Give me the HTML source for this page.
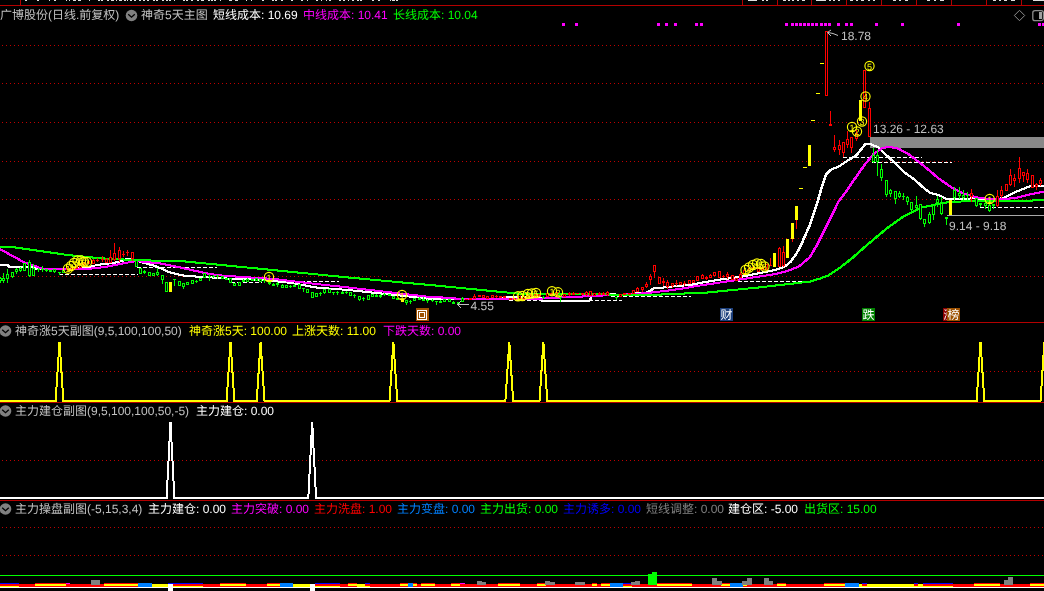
<!DOCTYPE html>
<html><head><meta charset="utf-8"><title>chart</title>
<style>
html,body{margin:0;padding:0;background:#000;overflow:hidden}
text{filter:opacity(1)}
svg{display:block;font-family:'Liberation Sans','Noto Sans CJK SC',sans-serif;}
</style></head><body>
<svg width="1044" height="591" viewBox="0 0 1044 591" shape-rendering="crispEdges" text-rendering="geometricPrecision">
<rect width="1044" height="591" fill="#000"/>
<line x1="2" y1="45.5" x2="1044" y2="45.5" stroke="#c00000" stroke-width="1" stroke-dasharray="1 3"/>
<line x1="2" y1="83.5" x2="1044" y2="83.5" stroke="#c00000" stroke-width="1" stroke-dasharray="1 3"/>
<line x1="2" y1="122.5" x2="1044" y2="122.5" stroke="#c00000" stroke-width="1" stroke-dasharray="1 3"/>
<line x1="2" y1="161.5" x2="1044" y2="161.5" stroke="#c00000" stroke-width="1" stroke-dasharray="1 3"/>
<line x1="2" y1="199.5" x2="1044" y2="199.5" stroke="#c00000" stroke-width="1" stroke-dasharray="1 3"/>
<line x1="2" y1="238.5" x2="1044" y2="238.5" stroke="#c00000" stroke-width="1" stroke-dasharray="1 3"/>
<line x1="2" y1="276.5" x2="1044" y2="276.5" stroke="#c00000" stroke-width="1" stroke-dasharray="1 3"/>
<line x1="2" y1="371.5" x2="1044" y2="371.5" stroke="#c00000" stroke-width="1" stroke-dasharray="1 3"/>
<line x1="2" y1="460.5" x2="1044" y2="460.5" stroke="#c00000" stroke-width="1" stroke-dasharray="1 3"/>
<line x1="2" y1="527.5" x2="1044" y2="527.5" stroke="#c00000" stroke-width="1" stroke-dasharray="1 3"/>
<line x1="2" y1="555.5" x2="1044" y2="555.5" stroke="#c00000" stroke-width="1" stroke-dasharray="1 3"/>
<line x1="0" y1="5.5" x2="1044" y2="5.5" stroke="#b40000" stroke-width="1"/>
<line x1="0" y1="322.5" x2="1044" y2="322.5" stroke="#b40000" stroke-width="1"/>
<line x1="0" y1="402.5" x2="1044" y2="402.5" stroke="#b40000" stroke-width="1"/>
<line x1="0" y1="500.5" x2="1044" y2="500.5" stroke="#b40000" stroke-width="1"/>
<line x1="20.5" y1="0" x2="20.5" y2="6" stroke="#b40000"/>
<line x1="742.5" y1="0" x2="742.5" y2="6" stroke="#b40000"/>
<line x1="777.5" y1="0" x2="777.5" y2="6" stroke="#b40000"/>
<line x1="811.5" y1="0" x2="811.5" y2="6" stroke="#b40000"/>
<line x1="846.5" y1="0" x2="846.5" y2="6" stroke="#b40000"/>
<line x1="881.5" y1="0" x2="881.5" y2="6" stroke="#b40000"/>
<line x1="916.5" y1="0" x2="916.5" y2="6" stroke="#b40000"/>
<line x1="951.5" y1="0" x2="951.5" y2="6" stroke="#b40000"/>
<line x1="986.5" y1="0" x2="986.5" y2="6" stroke="#b40000"/>
<line x1="1021.5" y1="0" x2="1021.5" y2="6" stroke="#b40000"/>
<rect x="870" y="137" width="174" height="11" fill="#888888"/>
<line x1="947" y1="215.5" x2="1044" y2="215.5" stroke="#a8a8a8" stroke-width="1"/>
<line x1="59" y1="274.5" x2="138" y2="274.5" stroke="#ffffff" stroke-width="1" stroke-dasharray="4 2"/>
<line x1="137" y1="267.5" x2="217" y2="267.5" stroke="#ffffff" stroke-width="1" stroke-dasharray="4 2"/>
<line x1="231" y1="282.5" x2="262" y2="282.5" stroke="#ffffff" stroke-width="1" stroke-dasharray="4 2"/>
<line x1="277" y1="281.5" x2="339" y2="281.5" stroke="#ffffff" stroke-width="1" stroke-dasharray="4 2"/>
<line x1="509" y1="300.5" x2="541" y2="300.5" stroke="#ffffff" stroke-width="1" stroke-dasharray="4 2"/>
<line x1="589" y1="300.5" x2="622" y2="300.5" stroke="#ffffff" stroke-width="1" stroke-dasharray="4 2"/>
<line x1="611" y1="296.5" x2="691" y2="296.5" stroke="#ffffff" stroke-width="1" stroke-dasharray="4 2"/>
<line x1="738" y1="281.5" x2="815" y2="281.5" stroke="#ffffff" stroke-width="1" stroke-dasharray="4 2"/>
<line x1="843" y1="157.5" x2="922" y2="157.5" stroke="#ffffff" stroke-width="1" stroke-dasharray="4 2"/>
<line x1="872" y1="162.5" x2="952" y2="162.5" stroke="#ffffff" stroke-width="1" stroke-dasharray="4 2"/>
<line x1="980" y1="207.5" x2="1044" y2="207.5" stroke="#ffffff" stroke-width="1" stroke-dasharray="4 2"/>
<polyline points="0.0,265.0 7.0,265.0 9.0,267.0 32.0,267.0 36.0,268.8 75.0,268.8 85.0,267.6 90.0,266.8 97.4,264.8 100.0,264.5 113.0,263.0 122.0,261.0 127.0,258.5 131.0,258.5 135.0,260.5 146.0,263.5 155.0,266.0 163.0,269.5 170.0,272.5 180.0,275.0 186.0,276.0 204.0,277.0 229.0,278.7 264.0,280.0 291.0,283.0 316.0,287.5 348.0,290.0 423.0,298.0 430.0,299.0 454.0,299.4 500.0,299.4 505.0,297.0 540.0,297.0 541.0,300.5 589.5,300.5 591.5,296.0 600.0,294.5 609.0,293.6 613.0,293.6 616.0,294.8 632.0,294.8 636.0,293.0 645.5,293.0 654.7,287.8 662.8,287.8 665.0,287.0 683.4,285.5 690.3,284.8 700.5,282.8 711.0,281.1 721.6,279.3 732.0,278.0 742.7,276.4 753.2,274.3 763.8,272.2 774.3,270.0 779.6,268.5 784.8,266.3 790.0,262.1 795.4,254.8 800.0,246.5 801.6,243.0 809.7,224.7 817.8,200.0 820.6,190.0 825.7,174.6 830.8,169.6 837.6,167.0 847.7,160.3 856.2,155.2 864.6,144.5 869.7,143.8 878.2,147.6 887.0,156.0 898.5,166.5 903.9,172.2 915.4,180.5 920.8,185.7 929.2,192.5 937.7,195.0 946.2,199.0 958.0,199.2 971.6,198.4 988.5,199.0 1002.0,198.4 1013.9,192.5 1029.0,186.5 1044.0,185.7" fill="none" stroke="#ffffff" stroke-width="2" stroke-linejoin="round"/>
<polyline points="0.0,265.0 7.0,265.0 9.0,267.0 32.0,267.0 36.0,268.8 75.0,268.8 85.0,267.6 90.0,266.8 97.4,264.8 100.0,264.5 113.0,263.0 122.0,261.0 127.0,258.5 131.0,258.5 135.0,260.5 146.0,263.5 155.0,266.0 163.0,269.5 170.0,272.5 180.0,275.0 186.0,276.0 204.0,277.0 229.0,278.7 264.0,280.0 291.0,283.0 316.0,287.5 348.0,290.0 423.0,298.0 430.0,299.0 454.0,299.4 500.0,299.4 505.0,297.0 540.0,297.0 541.0,300.5 589.5,300.5 591.5,296.0 600.0,294.5 609.0,293.6 613.0,293.6 616.0,294.8 632.0,294.8 636.0,293.0 645.5,293.0 654.7,287.8 662.8,287.8 665.0,287.0 683.4,285.5 690.3,284.8 700.5,282.8 711.0,281.1 721.6,279.3 732.0,278.0 742.7,276.4 753.2,274.3 763.8,272.2 774.3,270.0 779.6,268.5 784.8,266.3 790.0,262.1 795.4,254.8 800.0,246.5 801.6,243.0 809.7,224.7 817.8,200.0 820.6,190.0 825.7,174.6 830.8,169.6 837.6,167.0 847.7,160.3 856.2,155.2 864.6,144.5 869.7,143.8 878.2,147.6 887.0,156.0 898.5,166.5 903.9,172.2 915.4,180.5 920.8,185.7 929.2,192.5 937.7,195.0 946.2,199.0 958.0,199.2 971.6,198.4 988.5,199.0 1002.0,198.4 1013.9,192.5 1029.0,186.5 1044.0,185.7" fill="none" stroke="#ffffff" stroke-width="2" stroke-linejoin="round" transform="translate(0.6,0)"/>
<polyline points="0.0,249.3 24.0,262.4 34.5,266.0 40.0,268.0 45.0,269.0 80.0,269.0 90.0,268.6 97.0,268.0 107.0,266.5 117.0,264.5 125.0,263.0 133.0,261.5 137.0,261.0 141.0,261.5 150.0,262.5 160.0,263.5 170.0,265.5 180.0,267.5 209.0,274.0 224.0,275.8 274.0,279.0 307.0,283.0 348.0,287.5 430.0,297.0 441.0,297.0 442.0,298.0 454.0,298.0 455.0,299.0 540.0,299.0 545.0,298.0 558.0,298.0 562.0,297.0 580.0,297.0 583.0,296.2 589.0,296.2 639.0,293.7 649.0,292.8 659.0,291.6 672.0,290.0 686.0,288.0 690.0,287.0 711.0,283.8 732.0,280.7 742.7,279.0 753.2,277.4 763.8,275.8 774.3,274.2 784.8,271.6 795.4,267.9 800.0,265.4 809.7,257.0 817.8,243.0 828.0,222.6 838.0,202.0 846.9,190.0 856.2,176.3 864.6,164.5 873.0,154.3 881.6,148.4 888.3,146.7 898.5,148.8 908.7,154.5 920.5,163.5 930.0,171.3 937.7,178.0 951.3,187.4 963.0,193.3 975.0,197.2 988.5,199.0 1014.0,198.4 1029.0,194.5 1044.0,191.6" fill="none" stroke="#ff00ff" stroke-width="2" stroke-linejoin="round"/>
<polyline points="0.0,249.3 24.0,262.4 34.5,266.0 40.0,268.0 45.0,269.0 80.0,269.0 90.0,268.6 97.0,268.0 107.0,266.5 117.0,264.5 125.0,263.0 133.0,261.5 137.0,261.0 141.0,261.5 150.0,262.5 160.0,263.5 170.0,265.5 180.0,267.5 209.0,274.0 224.0,275.8 274.0,279.0 307.0,283.0 348.0,287.5 430.0,297.0 441.0,297.0 442.0,298.0 454.0,298.0 455.0,299.0 540.0,299.0 545.0,298.0 558.0,298.0 562.0,297.0 580.0,297.0 583.0,296.2 589.0,296.2 639.0,293.7 649.0,292.8 659.0,291.6 672.0,290.0 686.0,288.0 690.0,287.0 711.0,283.8 732.0,280.7 742.7,279.0 753.2,277.4 763.8,275.8 774.3,274.2 784.8,271.6 795.4,267.9 800.0,265.4 809.7,257.0 817.8,243.0 828.0,222.6 838.0,202.0 846.9,190.0 856.2,176.3 864.6,164.5 873.0,154.3 881.6,148.4 888.3,146.7 898.5,148.8 908.7,154.5 920.5,163.5 930.0,171.3 937.7,178.0 951.3,187.4 963.0,193.3 975.0,197.2 988.5,199.0 1014.0,198.4 1029.0,194.5 1044.0,191.6" fill="none" stroke="#ff00ff" stroke-width="2" stroke-linejoin="round" transform="translate(0.6,0)"/>
<polyline points="0.0,247.0 12.0,247.0 40.0,251.0 67.0,255.0 100.0,258.3 133.0,260.0 150.0,260.5 178.0,260.8 261.0,268.9 348.0,277.5 435.0,285.5 522.0,294.0 580.0,294.3 609.0,294.5 612.0,295.2 636.0,295.2 660.0,294.8 662.0,294.2 683.0,294.0 685.0,293.3 700.0,293.2 757.0,287.6 809.7,281.6 820.0,278.5 828.0,275.5 840.0,267.5 852.0,258.0 865.0,246.5 875.0,238.0 887.0,228.0 903.9,216.0 920.8,207.7 937.7,204.0 949.6,202.0 971.6,201.0 1005.5,200.6 1032.6,200.5 1037.7,199.5 1044.0,199.5" fill="none" stroke="#00ff00" stroke-width="2" stroke-linejoin="round"/>
<polyline points="0.0,247.0 12.0,247.0 40.0,251.0 67.0,255.0 100.0,258.3 133.0,260.0 150.0,260.5 178.0,260.8 261.0,268.9 348.0,277.5 435.0,285.5 522.0,294.0 580.0,294.3 609.0,294.5 612.0,295.2 636.0,295.2 660.0,294.8 662.0,294.2 683.0,294.0 685.0,293.3 700.0,293.2 757.0,287.6 809.7,281.6 820.0,278.5 828.0,275.5 840.0,267.5 852.0,258.0 865.0,246.5 875.0,238.0 887.0,228.0 903.9,216.0 920.8,207.7 937.7,204.0 949.6,202.0 971.6,201.0 1005.5,200.6 1032.6,200.5 1037.7,199.5 1044.0,199.5" fill="none" stroke="#00ff00" stroke-width="2" stroke-linejoin="round" transform="translate(0.6,0)"/>
<line x1="0.5" y1="277" x2="0.5" y2="278" stroke="#00ff00"/>
<line x1="0.5" y1="281" x2="0.5" y2="283" stroke="#00ff00"/>
<rect x="-0.5" y="278.5" width="2" height="2" fill="#000" stroke="#00ff00"/>
<line x1="3.5" y1="273" x2="3.5" y2="278" stroke="#00ff00"/>
<line x1="3.5" y1="281" x2="3.5" y2="283" stroke="#00ff00"/>
<rect x="2.5" y="278.5" width="2" height="2" fill="#000" stroke="#00ff00"/>
<line x1="7.5" y1="269" x2="7.5" y2="274" stroke="#00ff00"/>
<line x1="7.5" y1="279" x2="7.5" y2="283" stroke="#00ff00"/>
<rect x="6.5" y="274.5" width="2" height="4" fill="#000" stroke="#00ff00"/>
<line x1="12.5" y1="277" x2="12.5" y2="278" stroke="#00ff00"/>
<rect x="11.5" y="272.5" width="2" height="4" fill="#000" stroke="#00ff00"/>
<line x1="16.5" y1="268" x2="16.5" y2="269" stroke="#00ff00"/>
<line x1="16.5" y1="272" x2="16.5" y2="274" stroke="#00ff00"/>
<rect x="15.5" y="269.5" width="2" height="2" fill="#000" stroke="#00ff00"/>
<line x1="20.5" y1="267" x2="20.5" y2="268" stroke="#00ff00"/>
<line x1="20.5" y1="271" x2="20.5" y2="272" stroke="#00ff00"/>
<rect x="19.5" y="268.5" width="2" height="2" fill="#000" stroke="#00ff00"/>
<rect x="23.5" y="263.5" width="2" height="7" fill="#000" stroke="#00ff00"/>
<line x1="29.5" y1="260" x2="29.5" y2="262" stroke="#00ff00"/>
<line x1="29.5" y1="276" x2="29.5" y2="277" stroke="#00ff00"/>
<rect x="28.5" y="262.5" width="2" height="13" fill="#000" stroke="#00ff00"/>
<line x1="33.5" y1="264" x2="33.5" y2="268" stroke="#00ff00"/>
<rect x="32.5" y="268.5" width="2" height="7" fill="#000" stroke="#00ff00"/>
<line x1="38.5" y1="268" x2="38.5" y2="269" stroke="#00ff00"/>
<line x1="38.5" y1="270" x2="38.5" y2="272" stroke="#00ff00"/>
<line x1="37" y1="269.5" x2="40" y2="269.5" stroke="#00ff00"/>
<line x1="42.5" y1="266" x2="42.5" y2="269" stroke="#00ff00"/>
<line x1="42.5" y1="270" x2="42.5" y2="272" stroke="#00ff00"/>
<line x1="41" y1="269.5" x2="44" y2="269.5" stroke="#00ff00"/>
<line x1="46.5" y1="271" x2="46.5" y2="272" stroke="#00ff00"/>
<rect x="45.5" y="269.5" width="2" height="1" fill="#000" stroke="#00ff00"/>
<rect x="49.5" y="270.5" width="2" height="1" fill="#000" stroke="#00ff00"/>
<line x1="54.5" y1="272" x2="54.5" y2="273" stroke="#00ff00"/>
<rect x="53.5" y="269.5" width="2" height="2" fill="#000" stroke="#00ff00"/>
<line x1="59.5" y1="273" x2="59.5" y2="275" stroke="#00ff00"/>
<line x1="58" y1="272.5" x2="61" y2="272.5" stroke="#00ff00"/>
<rect x="62.5" y="270.5" width="2" height="2" fill="#000" stroke="#00ff00"/>
<line x1="67.5" y1="270" x2="67.5" y2="271" stroke="#ff0000"/>
<rect x="66.5" y="266.5" width="2" height="3" fill="#000" stroke="#ff0000"/>
<line x1="72.5" y1="266" x2="72.5" y2="267" stroke="#ff0000"/>
<rect x="71.5" y="267.5" width="2" height="2" fill="#000" stroke="#ff0000"/>
<line x1="76.5" y1="265" x2="76.5" y2="266" stroke="#ff0000"/>
<rect x="75.5" y="266.5" width="2" height="2" fill="#000" stroke="#ff0000"/>
<rect x="79.5" y="264.5" width="2" height="3" fill="#000" stroke="#ff0000"/>
<line x1="84.5" y1="265" x2="84.5" y2="266" stroke="#ff0000"/>
<rect x="83.5" y="262.5" width="2" height="2" fill="#000" stroke="#ff0000"/>
<line x1="88.5" y1="260" x2="88.5" y2="261" stroke="#ff0000"/>
<rect x="87.5" y="261.5" width="2" height="2" fill="#000" stroke="#ff0000"/>
<line x1="93.5" y1="259" x2="93.5" y2="260" stroke="#ff0000"/>
<rect x="92.5" y="260.5" width="2" height="3" fill="#000" stroke="#ff0000"/>
<line x1="97.5" y1="258" x2="97.5" y2="260" stroke="#ff0000"/>
<line x1="97.5" y1="261" x2="97.5" y2="262" stroke="#ff0000"/>
<line x1="96" y1="260.5" x2="99" y2="260.5" stroke="#ff0000"/>
<line x1="102.5" y1="256" x2="102.5" y2="259" stroke="#ff0000"/>
<line x1="102.5" y1="260" x2="102.5" y2="262" stroke="#ff0000"/>
<line x1="101" y1="259.5" x2="104" y2="259.5" stroke="#ff0000"/>
<line x1="106.5" y1="258" x2="106.5" y2="259" stroke="#ff0000"/>
<rect x="105.5" y="259.5" width="2" height="3" fill="#000" stroke="#ff0000"/>
<line x1="110.5" y1="250" x2="110.5" y2="257" stroke="#ff0000"/>
<rect x="109.5" y="257.5" width="2" height="5" fill="#000" stroke="#ff0000"/>
<line x1="114.5" y1="243" x2="114.5" y2="253" stroke="#ff0000"/>
<line x1="114.5" y1="260" x2="114.5" y2="261" stroke="#ff0000"/>
<rect x="113.5" y="253.5" width="2" height="6" fill="#000" stroke="#ff0000"/>
<line x1="119.5" y1="247" x2="119.5" y2="250" stroke="#ff0000"/>
<line x1="119.5" y1="259" x2="119.5" y2="262" stroke="#ff0000"/>
<rect x="118.5" y="250.5" width="2" height="8" fill="#000" stroke="#ff0000"/>
<line x1="123.5" y1="251" x2="123.5" y2="254" stroke="#ff0000"/>
<line x1="123.5" y1="255" x2="123.5" y2="257" stroke="#ff0000"/>
<line x1="122" y1="254.5" x2="125" y2="254.5" stroke="#ff0000"/>
<line x1="127.5" y1="250" x2="127.5" y2="252" stroke="#ff0000"/>
<line x1="127.5" y1="253" x2="127.5" y2="256" stroke="#ff0000"/>
<line x1="126" y1="252.5" x2="129" y2="252.5" stroke="#ff0000"/>
<line x1="132.5" y1="259" x2="132.5" y2="261" stroke="#ff0000"/>
<rect x="131.5" y="252.5" width="2" height="6" fill="#000" stroke="#ff0000"/>
<rect x="135.5" y="260.5" width="2" height="6" fill="#000" stroke="#00ff00"/>
<rect x="139.5" y="268.5" width="2" height="5" fill="#000" stroke="#00ff00"/>
<line x1="144.5" y1="270" x2="144.5" y2="271" stroke="#00ff00"/>
<line x1="144.5" y1="273" x2="144.5" y2="274" stroke="#00ff00"/>
<rect x="143.5" y="271.5" width="2" height="1" fill="#000" stroke="#00ff00"/>
<rect x="148.5" y="272.5" width="2" height="3" fill="#000" stroke="#00ff00"/>
<rect x="152.5" y="273.5" width="2" height="2" fill="#000" stroke="#00ff00"/>
<line x1="157.5" y1="268" x2="157.5" y2="272" stroke="#00ff00"/>
<line x1="157.5" y1="275" x2="157.5" y2="276" stroke="#00ff00"/>
<rect x="156.5" y="272.5" width="2" height="2" fill="#000" stroke="#00ff00"/>
<line x1="162.5" y1="280" x2="162.5" y2="284" stroke="#00ff00"/>
<rect x="161.5" y="275.5" width="2" height="4" fill="#000" stroke="#00ff00"/>
<rect x="165.5" y="282.5" width="2" height="9" fill="#000" stroke="#00ff00"/>
<rect x="169" y="282" width="3" height="10" fill="#ffff00"/>
<line x1="174.5" y1="280" x2="174.5" y2="286" stroke="#00ff00"/>
<line x1="173" y1="279.5" x2="176" y2="279.5" stroke="#00ff00"/>
<rect x="178.5" y="281.5" width="2" height="4" fill="#000" stroke="#00ff00"/>
<line x1="183.5" y1="287" x2="183.5" y2="289" stroke="#00ff00"/>
<rect x="182.5" y="283.5" width="2" height="3" fill="#000" stroke="#00ff00"/>
<rect x="186.5" y="282.5" width="2" height="2" fill="#000" stroke="#00ff00"/>
<rect x="191.5" y="280.5" width="2" height="3" fill="#000" stroke="#00ff00"/>
<line x1="196.5" y1="280" x2="196.5" y2="281" stroke="#00ff00"/>
<line x1="196.5" y1="282" x2="196.5" y2="283" stroke="#00ff00"/>
<line x1="195" y1="281.5" x2="198" y2="281.5" stroke="#00ff00"/>
<rect x="199.5" y="278.5" width="2" height="2" fill="#000" stroke="#00ff00"/>
<rect x="203.5" y="273.5" width="2" height="4" fill="#000" stroke="#00ff00"/>
<line x1="209.5" y1="274" x2="209.5" y2="276" stroke="#00ff00"/>
<line x1="209.5" y1="277" x2="209.5" y2="281" stroke="#00ff00"/>
<line x1="208" y1="276.5" x2="211" y2="276.5" stroke="#00ff00"/>
<line x1="213.5" y1="275" x2="213.5" y2="276" stroke="#00ff00"/>
<line x1="213.5" y1="277" x2="213.5" y2="278" stroke="#00ff00"/>
<line x1="212" y1="276.5" x2="215" y2="276.5" stroke="#00ff00"/>
<line x1="217.5" y1="276" x2="217.5" y2="279" stroke="#00ff00"/>
<line x1="216" y1="275.5" x2="219" y2="275.5" stroke="#00ff00"/>
<rect x="221.5" y="276.5" width="2" height="2" fill="#000" stroke="#00ff00"/>
<rect x="225.5" y="278.5" width="2" height="1" fill="#000" stroke="#00ff00"/>
<rect x="229.5" y="278.5" width="2" height="4" fill="#000" stroke="#00ff00"/>
<rect x="233.5" y="283.5" width="2" height="2" fill="#000" stroke="#00ff00"/>
<rect x="238.5" y="282.5" width="2" height="3" fill="#000" stroke="#00ff00"/>
<line x1="243.5" y1="279" x2="243.5" y2="280" stroke="#00ff00"/>
<rect x="242.5" y="280.5" width="2" height="1" fill="#000" stroke="#00ff00"/>
<line x1="247.5" y1="278" x2="247.5" y2="279" stroke="#00ff00"/>
<rect x="246.5" y="279.5" width="2" height="2" fill="#000" stroke="#00ff00"/>
<rect x="251.5" y="279.5" width="2" height="1" fill="#000" stroke="#00ff00"/>
<rect x="255.5" y="278.5" width="2" height="2" fill="#000" stroke="#00ff00"/>
<rect x="259.5" y="279.5" width="2" height="2" fill="#000" stroke="#00ff00"/>
<line x1="264.5" y1="279" x2="264.5" y2="280" stroke="#00ff00"/>
<line x1="264.5" y1="281" x2="264.5" y2="283" stroke="#00ff00"/>
<line x1="263" y1="280.5" x2="266" y2="280.5" stroke="#00ff00"/>
<line x1="269.5" y1="281" x2="269.5" y2="282" stroke="#00ff00"/>
<line x1="269.5" y1="284" x2="269.5" y2="285" stroke="#00ff00"/>
<rect x="268.5" y="282.5" width="2" height="1" fill="#000" stroke="#00ff00"/>
<line x1="273.5" y1="283" x2="273.5" y2="284" stroke="#00ff00"/>
<rect x="272.5" y="284.5" width="2" height="1" fill="#000" stroke="#00ff00"/>
<line x1="277.5" y1="282" x2="277.5" y2="283" stroke="#00ff00"/>
<line x1="277.5" y1="285" x2="277.5" y2="287" stroke="#00ff00"/>
<rect x="276.5" y="283.5" width="2" height="1" fill="#000" stroke="#00ff00"/>
<line x1="282.5" y1="284" x2="282.5" y2="285" stroke="#00ff00"/>
<rect x="281.5" y="285.5" width="2" height="2" fill="#000" stroke="#00ff00"/>
<rect x="285.5" y="285.5" width="2" height="2" fill="#000" stroke="#00ff00"/>
<line x1="290.5" y1="285" x2="290.5" y2="286" stroke="#00ff00"/>
<line x1="290.5" y1="287" x2="290.5" y2="288" stroke="#00ff00"/>
<line x1="289" y1="286.5" x2="292" y2="286.5" stroke="#00ff00"/>
<line x1="294.5" y1="284" x2="294.5" y2="285" stroke="#00ff00"/>
<rect x="293.5" y="285.5" width="2" height="1" fill="#000" stroke="#00ff00"/>
<rect x="298.5" y="284.5" width="2" height="4" fill="#000" stroke="#00ff00"/>
<line x1="303.5" y1="289" x2="303.5" y2="292" stroke="#00ff00"/>
<line x1="302" y1="288.5" x2="305" y2="288.5" stroke="#00ff00"/>
<rect x="306.5" y="289.5" width="2" height="3" fill="#000" stroke="#00ff00"/>
<rect x="311.5" y="292.5" width="2" height="5" fill="#000" stroke="#00ff00"/>
<rect x="315.5" y="293.5" width="2" height="3" fill="#000" stroke="#00ff00"/>
<line x1="320.5" y1="292" x2="320.5" y2="293" stroke="#00ff00"/>
<line x1="320.5" y1="294" x2="320.5" y2="296" stroke="#00ff00"/>
<line x1="319" y1="293.5" x2="322" y2="293.5" stroke="#00ff00"/>
<line x1="324.5" y1="293" x2="324.5" y2="294" stroke="#00ff00"/>
<rect x="323.5" y="289.5" width="2" height="3" fill="#000" stroke="#00ff00"/>
<rect x="328.5" y="289.5" width="2" height="3" fill="#000" stroke="#00ff00"/>
<line x1="333.5" y1="293" x2="333.5" y2="295" stroke="#00ff00"/>
<line x1="332" y1="292.5" x2="335" y2="292.5" stroke="#00ff00"/>
<line x1="337.5" y1="291" x2="337.5" y2="292" stroke="#00ff00"/>
<line x1="337.5" y1="293" x2="337.5" y2="295" stroke="#00ff00"/>
<line x1="336" y1="292.5" x2="339" y2="292.5" stroke="#00ff00"/>
<line x1="342.5" y1="291" x2="342.5" y2="292" stroke="#00ff00"/>
<rect x="341.5" y="292.5" width="2" height="1" fill="#000" stroke="#00ff00"/>
<line x1="346.5" y1="291" x2="346.5" y2="292" stroke="#00ff00"/>
<line x1="346.5" y1="293" x2="346.5" y2="294" stroke="#00ff00"/>
<line x1="345" y1="292.5" x2="348" y2="292.5" stroke="#00ff00"/>
<rect x="349.5" y="292.5" width="2" height="3" fill="#000" stroke="#00ff00"/>
<line x1="354.5" y1="294" x2="354.5" y2="295" stroke="#00ff00"/>
<line x1="354.5" y1="296" x2="354.5" y2="298" stroke="#00ff00"/>
<line x1="353" y1="295.5" x2="356" y2="295.5" stroke="#00ff00"/>
<line x1="359.5" y1="300" x2="359.5" y2="301" stroke="#00ff00"/>
<rect x="358.5" y="296.5" width="2" height="3" fill="#000" stroke="#00ff00"/>
<line x1="363.5" y1="297" x2="363.5" y2="298" stroke="#00ff00"/>
<line x1="363.5" y1="299" x2="363.5" y2="301" stroke="#00ff00"/>
<line x1="362" y1="298.5" x2="365" y2="298.5" stroke="#00ff00"/>
<rect x="367.5" y="295.5" width="2" height="4" fill="#000" stroke="#00ff00"/>
<rect x="371.5" y="294.5" width="2" height="2" fill="#000" stroke="#00ff00"/>
<line x1="376.5" y1="294" x2="376.5" y2="295" stroke="#00ff00"/>
<rect x="375.5" y="295.5" width="2" height="1" fill="#000" stroke="#00ff00"/>
<line x1="380.5" y1="294" x2="380.5" y2="295" stroke="#00ff00"/>
<line x1="380.5" y1="297" x2="380.5" y2="298" stroke="#00ff00"/>
<rect x="379.5" y="295.5" width="2" height="1" fill="#000" stroke="#00ff00"/>
<line x1="384.5" y1="293" x2="384.5" y2="294" stroke="#00ff00"/>
<line x1="384.5" y1="295" x2="384.5" y2="296" stroke="#00ff00"/>
<line x1="383" y1="294.5" x2="386" y2="294.5" stroke="#00ff00"/>
<rect x="388.5" y="294.5" width="2" height="1" fill="#000" stroke="#00ff00"/>
<rect x="392.5" y="296.5" width="2" height="2" fill="#000" stroke="#00ff00"/>
<rect x="396.5" y="298.5" width="2" height="1" fill="#000" stroke="#00ff00"/>
<line x1="406.5" y1="303" x2="406.5" y2="305" stroke="#00ff00"/>
<rect x="405.5" y="300.5" width="2" height="2" fill="#000" stroke="#00ff00"/>
<line x1="410.5" y1="300" x2="410.5" y2="301" stroke="#00ff00"/>
<line x1="410.5" y1="302" x2="410.5" y2="304" stroke="#00ff00"/>
<line x1="409" y1="301.5" x2="412" y2="301.5" stroke="#00ff00"/>
<rect x="413.5" y="298.5" width="2" height="2" fill="#000" stroke="#00ff00"/>
<line x1="419.5" y1="297" x2="419.5" y2="298" stroke="#00ff00"/>
<rect x="418.5" y="298.5" width="2" height="1" fill="#000" stroke="#00ff00"/>
<line x1="423.5" y1="297" x2="423.5" y2="299" stroke="#00ff00"/>
<rect x="422.5" y="299.5" width="2" height="1" fill="#000" stroke="#00ff00"/>
<line x1="427.5" y1="299" x2="427.5" y2="300" stroke="#00ff00"/>
<line x1="427.5" y1="301" x2="427.5" y2="303" stroke="#00ff00"/>
<line x1="426" y1="300.5" x2="429" y2="300.5" stroke="#00ff00"/>
<line x1="432.5" y1="299" x2="432.5" y2="300" stroke="#00ff00"/>
<line x1="432.5" y1="301" x2="432.5" y2="302" stroke="#00ff00"/>
<line x1="431" y1="300.5" x2="434" y2="300.5" stroke="#00ff00"/>
<line x1="436.5" y1="302" x2="436.5" y2="305" stroke="#00ff00"/>
<line x1="435" y1="301.5" x2="438" y2="301.5" stroke="#00ff00"/>
<line x1="440.5" y1="300" x2="440.5" y2="301" stroke="#00ff00"/>
<rect x="439.5" y="301.5" width="2" height="1" fill="#000" stroke="#00ff00"/>
<rect x="443.5" y="299.5" width="2" height="2" fill="#000" stroke="#00ff00"/>
<rect x="448.5" y="299.5" width="2" height="2" fill="#000" stroke="#00ff00"/>
<line x1="453.5" y1="301" x2="453.5" y2="302" stroke="#00ff00"/>
<rect x="452.5" y="302.5" width="2" height="1" fill="#000" stroke="#00ff00"/>
<rect x="457.5" y="302.5" width="2" height="1" fill="#000" stroke="#00ff00"/>
<line x1="462.5" y1="297" x2="462.5" y2="298" stroke="#00ff00"/>
<rect x="461.5" y="298.5" width="2" height="3" fill="#000" stroke="#00ff00"/>
<line x1="465" y1="299.5" x2="468" y2="299.5" stroke="#ff0000"/>
<rect x="469.5" y="298.5" width="2" height="1" fill="#000" stroke="#ff0000"/>
<line x1="474.5" y1="294" x2="474.5" y2="296" stroke="#ff0000"/>
<rect x="473.5" y="296.5" width="2" height="2" fill="#000" stroke="#ff0000"/>
<rect x="478.5" y="295.5" width="2" height="1" fill="#000" stroke="#ff0000"/>
<rect x="482.5" y="295.5" width="2" height="2" fill="#000" stroke="#ff0000"/>
<rect x="486.5" y="296.5" width="2" height="2" fill="#000" stroke="#ff0000"/>
<rect x="491.5" y="295.5" width="2" height="2" fill="#000" stroke="#ff0000"/>
<line x1="496.5" y1="295" x2="496.5" y2="296" stroke="#ff0000"/>
<line x1="496.5" y1="297" x2="496.5" y2="298" stroke="#ff0000"/>
<line x1="495" y1="296.5" x2="498" y2="296.5" stroke="#ff0000"/>
<rect x="499.5" y="296.5" width="2" height="1" fill="#000" stroke="#ff0000"/>
<rect x="503.5" y="296.5" width="2" height="1" fill="#000" stroke="#ff0000"/>
<rect x="509.5" y="298.5" width="2" height="1" fill="#000" stroke="#ff0000"/>
<rect x="513.5" y="298.5" width="2" height="1" fill="#000" stroke="#ff0000"/>
<rect x="518.5" y="296.5" width="2" height="2" fill="#000" stroke="#ff0000"/>
<rect x="522.5" y="296.5" width="2" height="2" fill="#000" stroke="#ff0000"/>
<rect x="526.5" y="295.5" width="2" height="2" fill="#000" stroke="#ff0000"/>
<rect x="530.5" y="294.5" width="2" height="2" fill="#000" stroke="#ff0000"/>
<rect x="534.5" y="294.5" width="2" height="2" fill="#000" stroke="#ff0000"/>
<rect x="538.5" y="294.5" width="2" height="2" fill="#000" stroke="#ff0000"/>
<rect x="546.5" y="293.5" width="2" height="3" fill="#000" stroke="#ff0000"/>
<rect x="550.5" y="293.5" width="2" height="2" fill="#000" stroke="#ff0000"/>
<rect x="555.5" y="292.5" width="2" height="2" fill="#000" stroke="#ff0000"/>
<rect x="563.5" y="294.5" width="2" height="2" fill="#000" stroke="#ff0000"/>
<line x1="569.5" y1="292" x2="569.5" y2="293" stroke="#ff0000"/>
<line x1="569.5" y1="295" x2="569.5" y2="296" stroke="#ff0000"/>
<rect x="568.5" y="293.5" width="2" height="1" fill="#000" stroke="#ff0000"/>
<line x1="573.5" y1="292" x2="573.5" y2="293" stroke="#ff0000"/>
<rect x="572.5" y="293.5" width="2" height="1" fill="#000" stroke="#ff0000"/>
<line x1="576" y1="293.5" x2="579" y2="293.5" stroke="#ff0000"/>
<rect x="581.5" y="293.5" width="2" height="1" fill="#000" stroke="#ff0000"/>
<line x1="586.5" y1="291" x2="586.5" y2="292" stroke="#ff0000"/>
<line x1="586.5" y1="295" x2="586.5" y2="296" stroke="#ff0000"/>
<rect x="585.5" y="292.5" width="2" height="2" fill="#000" stroke="#ff0000"/>
<rect x="589.5" y="291.5" width="2" height="4" fill="#000" stroke="#ff0000"/>
<rect x="593.5" y="293.5" width="2" height="2" fill="#000" stroke="#ff0000"/>
<line x1="599.5" y1="292" x2="599.5" y2="293" stroke="#ff0000"/>
<rect x="598.5" y="293.5" width="2" height="1" fill="#000" stroke="#ff0000"/>
<line x1="603.5" y1="292" x2="603.5" y2="293" stroke="#ff0000"/>
<rect x="602.5" y="293.5" width="2" height="1" fill="#000" stroke="#ff0000"/>
<line x1="607.5" y1="291" x2="607.5" y2="292" stroke="#ff0000"/>
<line x1="607.5" y1="295" x2="607.5" y2="296" stroke="#ff0000"/>
<rect x="606.5" y="292.5" width="2" height="2" fill="#000" stroke="#ff0000"/>
<rect x="619.5" y="294.5" width="2" height="2" fill="#000" stroke="#ff0000"/>
<rect x="623.5" y="293.5" width="2" height="1" fill="#000" stroke="#ff0000"/>
<rect x="628.5" y="293.5" width="2" height="1" fill="#000" stroke="#ff0000"/>
<rect x="632.5" y="290.5" width="2" height="3" fill="#000" stroke="#ff0000"/>
<line x1="637.5" y1="287" x2="637.5" y2="288" stroke="#ff0000"/>
<rect x="636.5" y="288.5" width="2" height="3" fill="#000" stroke="#ff0000"/>
<line x1="642.5" y1="290" x2="642.5" y2="292" stroke="#ff0000"/>
<rect x="641.5" y="287.5" width="2" height="2" fill="#000" stroke="#ff0000"/>
<line x1="646.5" y1="282" x2="646.5" y2="284" stroke="#ff0000"/>
<line x1="646.5" y1="287" x2="646.5" y2="288" stroke="#ff0000"/>
<rect x="645.5" y="284.5" width="2" height="2" fill="#000" stroke="#ff0000"/>
<line x1="650.5" y1="274" x2="650.5" y2="276" stroke="#ff0000"/>
<line x1="650.5" y1="280" x2="650.5" y2="285" stroke="#ff0000"/>
<rect x="649.5" y="276.5" width="2" height="3" fill="#000" stroke="#ff0000"/>
<line x1="654.5" y1="272" x2="654.5" y2="278" stroke="#ff0000"/>
<rect x="653.5" y="265.5" width="2" height="6" fill="#000" stroke="#ff0000"/>
<rect x="658.5" y="277.5" width="2" height="6" fill="#000" stroke="#ff0000"/>
<line x1="663.5" y1="278" x2="663.5" y2="281" stroke="#ff0000"/>
<line x1="663.5" y1="283" x2="663.5" y2="286" stroke="#ff0000"/>
<rect x="662.5" y="281.5" width="2" height="1" fill="#000" stroke="#ff0000"/>
<line x1="667.5" y1="280" x2="667.5" y2="282" stroke="#ff0000"/>
<line x1="667.5" y1="287" x2="667.5" y2="289" stroke="#ff0000"/>
<rect x="666.5" y="282.5" width="2" height="4" fill="#000" stroke="#ff0000"/>
<line x1="672.5" y1="286" x2="672.5" y2="288" stroke="#ff0000"/>
<rect x="671.5" y="283.5" width="2" height="2" fill="#000" stroke="#ff0000"/>
<line x1="676.5" y1="280" x2="676.5" y2="283" stroke="#ff0000"/>
<line x1="676.5" y1="284" x2="676.5" y2="286" stroke="#ff0000"/>
<line x1="675" y1="283.5" x2="678" y2="283.5" stroke="#ff0000"/>
<rect x="679.5" y="282.5" width="2" height="2" fill="#000" stroke="#ff0000"/>
<line x1="684.5" y1="281" x2="684.5" y2="283" stroke="#ff0000"/>
<line x1="684.5" y1="284" x2="684.5" y2="286" stroke="#ff0000"/>
<line x1="683" y1="283.5" x2="686" y2="283.5" stroke="#ff0000"/>
<rect x="688.5" y="280.5" width="2" height="3" fill="#000" stroke="#ff0000"/>
<rect x="692.5" y="280.5" width="2" height="2" fill="#000" stroke="#ff0000"/>
<rect x="696.5" y="276.5" width="2" height="4" fill="#000" stroke="#ff0000"/>
<line x1="702.5" y1="274" x2="702.5" y2="275" stroke="#ff0000"/>
<rect x="701.5" y="275.5" width="2" height="3" fill="#000" stroke="#ff0000"/>
<line x1="706.5" y1="276" x2="706.5" y2="277" stroke="#ff0000"/>
<line x1="706.5" y1="279" x2="706.5" y2="280" stroke="#ff0000"/>
<rect x="705.5" y="277.5" width="2" height="1" fill="#000" stroke="#ff0000"/>
<line x1="710.5" y1="274" x2="710.5" y2="275" stroke="#ff0000"/>
<rect x="709.5" y="275.5" width="2" height="2" fill="#000" stroke="#ff0000"/>
<rect x="713.5" y="272.5" width="2" height="3" fill="#000" stroke="#ff0000"/>
<rect x="718.5" y="271.5" width="2" height="6" fill="#000" stroke="#ff0000"/>
<line x1="723.5" y1="275" x2="723.5" y2="276" stroke="#ff0000"/>
<line x1="723.5" y1="277" x2="723.5" y2="278" stroke="#ff0000"/>
<line x1="722" y1="276.5" x2="725" y2="276.5" stroke="#ff0000"/>
<line x1="727.5" y1="272" x2="727.5" y2="274" stroke="#ff0000"/>
<line x1="727.5" y1="277" x2="727.5" y2="279" stroke="#ff0000"/>
<rect x="726.5" y="274.5" width="2" height="2" fill="#000" stroke="#ff0000"/>
<rect x="731.5" y="275.5" width="2" height="4" fill="#000" stroke="#ff0000"/>
<rect x="735.5" y="278.5" width="2" height="2" fill="#000" stroke="#ff0000"/>
<line x1="740.5" y1="272" x2="740.5" y2="274" stroke="#ff0000"/>
<rect x="739.5" y="274.5" width="2" height="3" fill="#000" stroke="#ff0000"/>
<rect x="743.5" y="270.5" width="2" height="3" fill="#000" stroke="#ff0000"/>
<rect x="748.5" y="268.5" width="2" height="2" fill="#000" stroke="#ff0000"/>
<rect x="752.5" y="267.5" width="2" height="2" fill="#000" stroke="#ff0000"/>
<rect x="757.5" y="268.5" width="2" height="3" fill="#000" stroke="#ff0000"/>
<rect x="761.5" y="267.5" width="2" height="2" fill="#000" stroke="#ff0000"/>
<rect x="765.5" y="264.5" width="2" height="5" fill="#000" stroke="#ff0000"/>
<line x1="770.5" y1="258" x2="770.5" y2="265" stroke="#ff0000"/>
<line x1="769" y1="265.5" x2="772" y2="265.5" stroke="#ff0000"/>
<line x1="779.5" y1="247" x2="779.5" y2="248" stroke="#ff0000"/>
<rect x="778.5" y="248.5" width="2" height="18" fill="#000" stroke="#ff0000"/>
<line x1="783.5" y1="246" x2="783.5" y2="252" stroke="#ff0000"/>
<line x1="783.5" y1="266" x2="783.5" y2="267" stroke="#ff0000"/>
<rect x="782.5" y="252.5" width="2" height="13" fill="#000" stroke="#ff0000"/>
<line x1="543.5" y1="296" x2="543.5" y2="297" stroke="#00ff00"/>
<line x1="543.5" y1="298" x2="543.5" y2="299" stroke="#00ff00"/>
<line x1="542" y1="297.5" x2="545" y2="297.5" stroke="#00ff00"/>
<line x1="560.5" y1="298" x2="560.5" y2="302" stroke="#00ff00"/>
<line x1="559" y1="297.5" x2="562" y2="297.5" stroke="#00ff00"/>
<line x1="616.5" y1="298" x2="616.5" y2="300" stroke="#00ff00"/>
<line x1="615" y1="297.5" x2="618" y2="297.5" stroke="#00ff00"/>
<rect x="401" y="299" width="3" height="3" fill="#ffff00"/>
<rect x="773" y="253" width="3" height="14" fill="#ffff00"/>
<rect x="786" y="239" width="3" height="19" fill="#ffff00"/>
<rect x="791" y="223" width="3" height="16" fill="#ffff00"/>
<rect x="795" y="206" width="3" height="14" fill="#ffff00"/>
<rect x="808" y="145" width="3" height="21" fill="#ffff00"/>
<rect x="859" y="100" width="3" height="21" fill="#ffff00"/>
<rect x="949" y="200" width="3" height="15" fill="#ffff00"/>
<line x1="792.5" y1="239" x2="792.5" y2="242" stroke="#ff0000"/>
<line x1="796.5" y1="220" x2="796.5" y2="229" stroke="#ff0000"/>
<rect x="825.5" y="31.5" width="2" height="64" fill="#000" stroke="#ff0000"/>
<line x1="830.5" y1="111" x2="830.5" y2="124" stroke="#ff0000"/>
<rect x="829.5" y="124.5" width="2" height="1" fill="#000" stroke="#ff0000"/>
<line x1="834.5" y1="135" x2="834.5" y2="147" stroke="#ff0000"/>
<line x1="834.5" y1="150" x2="834.5" y2="152" stroke="#ff0000"/>
<rect x="833.5" y="147.5" width="2" height="2" fill="#000" stroke="#ff0000"/>
<line x1="839.5" y1="140" x2="839.5" y2="145" stroke="#ff0000"/>
<line x1="839.5" y1="150" x2="839.5" y2="155" stroke="#ff0000"/>
<rect x="838.5" y="145.5" width="2" height="4" fill="#000" stroke="#ff0000"/>
<line x1="843.5" y1="153" x2="843.5" y2="157" stroke="#ff0000"/>
<rect x="842.5" y="142.5" width="2" height="10" fill="#000" stroke="#ff0000"/>
<line x1="847.5" y1="131" x2="847.5" y2="139" stroke="#ff0000"/>
<line x1="847.5" y1="145" x2="847.5" y2="148" stroke="#ff0000"/>
<rect x="846.5" y="139.5" width="2" height="5" fill="#000" stroke="#ff0000"/>
<line x1="851.5" y1="148" x2="851.5" y2="153" stroke="#ff0000"/>
<rect x="850.5" y="137.5" width="2" height="10" fill="#000" stroke="#ff0000"/>
<line x1="856.5" y1="130" x2="856.5" y2="133" stroke="#ff0000"/>
<line x1="856.5" y1="139" x2="856.5" y2="141" stroke="#ff0000"/>
<rect x="855.5" y="133.5" width="2" height="5" fill="#000" stroke="#ff0000"/>
<rect x="863.5" y="70.5" width="2" height="37" fill="#000" stroke="#ff0000"/>
<line x1="869.5" y1="102" x2="869.5" y2="108" stroke="#ff0000"/>
<rect x="868.5" y="108.5" width="2" height="28" fill="#000" stroke="#ff0000"/>
<line x1="873.5" y1="148" x2="873.5" y2="155" stroke="#00ff00"/>
<line x1="873.5" y1="162" x2="873.5" y2="163" stroke="#00ff00"/>
<rect x="872.5" y="155.5" width="2" height="6" fill="#000" stroke="#00ff00"/>
<line x1="877.5" y1="150" x2="877.5" y2="155" stroke="#00ff00"/>
<line x1="877.5" y1="162" x2="877.5" y2="176" stroke="#00ff00"/>
<rect x="876.5" y="155.5" width="2" height="6" fill="#000" stroke="#00ff00"/>
<line x1="881.5" y1="164" x2="881.5" y2="169" stroke="#00ff00"/>
<line x1="881.5" y1="178" x2="881.5" y2="181" stroke="#00ff00"/>
<rect x="880.5" y="169.5" width="2" height="8" fill="#000" stroke="#00ff00"/>
<line x1="886.5" y1="195" x2="886.5" y2="197" stroke="#00ff00"/>
<rect x="885.5" y="180.5" width="2" height="14" fill="#000" stroke="#00ff00"/>
<line x1="890.5" y1="189" x2="890.5" y2="190" stroke="#00ff00"/>
<line x1="890.5" y1="194" x2="890.5" y2="197" stroke="#00ff00"/>
<rect x="889.5" y="190.5" width="2" height="3" fill="#000" stroke="#00ff00"/>
<line x1="895.5" y1="199" x2="895.5" y2="204" stroke="#00ff00"/>
<rect x="894.5" y="191.5" width="2" height="7" fill="#000" stroke="#00ff00"/>
<line x1="899.5" y1="191" x2="899.5" y2="193" stroke="#00ff00"/>
<line x1="899.5" y1="197" x2="899.5" y2="198" stroke="#00ff00"/>
<rect x="898.5" y="193.5" width="2" height="3" fill="#000" stroke="#00ff00"/>
<line x1="903.5" y1="193" x2="903.5" y2="196" stroke="#00ff00"/>
<line x1="903.5" y1="197" x2="903.5" y2="200" stroke="#00ff00"/>
<line x1="902" y1="196.5" x2="905" y2="196.5" stroke="#00ff00"/>
<line x1="907.5" y1="196" x2="907.5" y2="197" stroke="#00ff00"/>
<line x1="907.5" y1="202" x2="907.5" y2="205" stroke="#00ff00"/>
<rect x="906.5" y="197.5" width="2" height="4" fill="#000" stroke="#00ff00"/>
<line x1="911.5" y1="210" x2="911.5" y2="212" stroke="#00ff00"/>
<rect x="910.5" y="202.5" width="2" height="7" fill="#000" stroke="#00ff00"/>
<line x1="916.5" y1="196" x2="916.5" y2="205" stroke="#00ff00"/>
<line x1="916.5" y1="208" x2="916.5" y2="210" stroke="#00ff00"/>
<rect x="915.5" y="205.5" width="2" height="2" fill="#000" stroke="#00ff00"/>
<line x1="920.5" y1="219" x2="920.5" y2="220" stroke="#00ff00"/>
<rect x="919.5" y="204.5" width="2" height="14" fill="#000" stroke="#00ff00"/>
<line x1="924.5" y1="224" x2="924.5" y2="227" stroke="#00ff00"/>
<rect x="923.5" y="219.5" width="2" height="4" fill="#000" stroke="#00ff00"/>
<line x1="929.5" y1="212" x2="929.5" y2="214" stroke="#00ff00"/>
<line x1="929.5" y1="223" x2="929.5" y2="224" stroke="#00ff00"/>
<rect x="928.5" y="214.5" width="2" height="8" fill="#000" stroke="#00ff00"/>
<line x1="933.5" y1="215" x2="933.5" y2="220" stroke="#00ff00"/>
<rect x="932.5" y="205.5" width="2" height="9" fill="#000" stroke="#00ff00"/>
<line x1="937.5" y1="196" x2="937.5" y2="199" stroke="#00ff00"/>
<line x1="937.5" y1="203" x2="937.5" y2="207" stroke="#00ff00"/>
<rect x="936.5" y="199.5" width="2" height="3" fill="#000" stroke="#00ff00"/>
<line x1="941.5" y1="197" x2="941.5" y2="203" stroke="#00ff00"/>
<line x1="941.5" y1="214" x2="941.5" y2="215" stroke="#00ff00"/>
<rect x="940.5" y="203.5" width="2" height="10" fill="#000" stroke="#00ff00"/>
<line x1="946.5" y1="219" x2="946.5" y2="225" stroke="#00ff00"/>
<rect x="945.5" y="217.5" width="2" height="1" fill="#000" stroke="#00ff00"/>
<line x1="954.5" y1="187" x2="954.5" y2="190" stroke="#00ff00"/>
<line x1="954.5" y1="198" x2="954.5" y2="202" stroke="#00ff00"/>
<rect x="953.5" y="190.5" width="2" height="7" fill="#000" stroke="#00ff00"/>
<line x1="959.5" y1="187" x2="959.5" y2="193" stroke="#00ff00"/>
<line x1="959.5" y1="196" x2="959.5" y2="199" stroke="#00ff00"/>
<rect x="958.5" y="193.5" width="2" height="2" fill="#000" stroke="#00ff00"/>
<line x1="963.5" y1="190" x2="963.5" y2="195" stroke="#00ff00"/>
<line x1="963.5" y1="198" x2="963.5" y2="200" stroke="#00ff00"/>
<rect x="962.5" y="195.5" width="2" height="2" fill="#000" stroke="#00ff00"/>
<line x1="967.5" y1="192" x2="967.5" y2="195" stroke="#00ff00"/>
<line x1="967.5" y1="196" x2="967.5" y2="200" stroke="#00ff00"/>
<line x1="966" y1="195.5" x2="969" y2="195.5" stroke="#00ff00"/>
<line x1="971.5" y1="189" x2="971.5" y2="193" stroke="#ff0000"/>
<line x1="971.5" y1="197" x2="971.5" y2="202" stroke="#ff0000"/>
<rect x="970.5" y="193.5" width="2" height="3" fill="#000" stroke="#ff0000"/>
<line x1="976.5" y1="206" x2="976.5" y2="207" stroke="#00ff00"/>
<rect x="975.5" y="198.5" width="2" height="7" fill="#000" stroke="#00ff00"/>
<line x1="980.5" y1="205" x2="980.5" y2="207" stroke="#00ff00"/>
<rect x="979.5" y="203.5" width="2" height="1" fill="#000" stroke="#00ff00"/>
<line x1="985.5" y1="202" x2="985.5" y2="203" stroke="#00ff00"/>
<line x1="985.5" y1="206" x2="985.5" y2="209" stroke="#00ff00"/>
<rect x="984.5" y="203.5" width="2" height="2" fill="#000" stroke="#00ff00"/>
<line x1="989.5" y1="200" x2="989.5" y2="205" stroke="#00ff00"/>
<line x1="989.5" y1="211" x2="989.5" y2="212" stroke="#00ff00"/>
<rect x="988.5" y="205.5" width="2" height="5" fill="#000" stroke="#00ff00"/>
<line x1="993.5" y1="206" x2="993.5" y2="209" stroke="#00ff00"/>
<rect x="992.5" y="204.5" width="2" height="1" fill="#000" stroke="#00ff00"/>
<line x1="997.5" y1="190" x2="997.5" y2="196" stroke="#ff0000"/>
<line x1="997.5" y1="206" x2="997.5" y2="207" stroke="#ff0000"/>
<rect x="996.5" y="196.5" width="2" height="9" fill="#000" stroke="#ff0000"/>
<line x1="1001.5" y1="186" x2="1001.5" y2="190" stroke="#ff0000"/>
<line x1="1001.5" y1="196" x2="1001.5" y2="198" stroke="#ff0000"/>
<rect x="1000.5" y="190.5" width="2" height="5" fill="#000" stroke="#ff0000"/>
<rect x="1005.5" y="184.5" width="2" height="6" fill="#000" stroke="#ff0000"/>
<line x1="1010.5" y1="169" x2="1010.5" y2="175" stroke="#ff0000"/>
<line x1="1010.5" y1="185" x2="1010.5" y2="186" stroke="#ff0000"/>
<rect x="1009.5" y="175.5" width="2" height="9" fill="#000" stroke="#ff0000"/>
<line x1="1014.5" y1="174" x2="1014.5" y2="178" stroke="#ff0000"/>
<line x1="1014.5" y1="181" x2="1014.5" y2="187" stroke="#ff0000"/>
<rect x="1013.5" y="178.5" width="2" height="2" fill="#000" stroke="#ff0000"/>
<line x1="1019.5" y1="157" x2="1019.5" y2="168" stroke="#ff0000"/>
<line x1="1019.5" y1="179" x2="1019.5" y2="183" stroke="#ff0000"/>
<rect x="1018.5" y="168.5" width="2" height="10" fill="#000" stroke="#ff0000"/>
<line x1="1023.5" y1="176" x2="1023.5" y2="182" stroke="#ff0000"/>
<rect x="1022.5" y="172.5" width="2" height="3" fill="#000" stroke="#ff0000"/>
<line x1="1027.5" y1="169" x2="1027.5" y2="173" stroke="#ff0000"/>
<line x1="1027.5" y1="180" x2="1027.5" y2="183" stroke="#ff0000"/>
<rect x="1026.5" y="173.5" width="2" height="6" fill="#000" stroke="#ff0000"/>
<rect x="1031.5" y="175.5" width="2" height="12" fill="#000" stroke="#ff0000"/>
<line x1="1036.5" y1="183" x2="1036.5" y2="184" stroke="#ff0000"/>
<line x1="1036.5" y1="187" x2="1036.5" y2="190" stroke="#ff0000"/>
<rect x="1035.5" y="184.5" width="2" height="2" fill="#000" stroke="#ff0000"/>
<line x1="1040.5" y1="178" x2="1040.5" y2="180" stroke="#ff0000"/>
<line x1="1040.5" y1="184" x2="1040.5" y2="186" stroke="#ff0000"/>
<rect x="1039.5" y="180.5" width="2" height="3" fill="#000" stroke="#ff0000"/>
<line x1="820" y1="63.5" x2="824" y2="63.5" stroke="#ffff00"/>
<line x1="816" y1="93.5" x2="820" y2="93.5" stroke="#ffff00"/>
<line x1="811" y1="120.5" x2="815" y2="120.5" stroke="#ffff00"/>
<line x1="803" y1="167.5" x2="807" y2="167.5" stroke="#ffff00"/>
<line x1="799" y1="188.5" x2="803" y2="188.5" stroke="#ffff00"/>
<rect x="562" y="23" width="3" height="3" fill="#ff00ff"/>
<rect x="575" y="23" width="3" height="3" fill="#ff00ff"/>
<rect x="657" y="23" width="3" height="3" fill="#ff00ff"/>
<rect x="665" y="23" width="3" height="3" fill="#ff00ff"/>
<rect x="674" y="23" width="3" height="3" fill="#ff00ff"/>
<rect x="695" y="23" width="3" height="3" fill="#ff00ff"/>
<rect x="700" y="23" width="3" height="3" fill="#ff00ff"/>
<rect x="785" y="23" width="3" height="3" fill="#ff00ff"/>
<rect x="791" y="23" width="3" height="3" fill="#ff00ff"/>
<rect x="795" y="23" width="3" height="3" fill="#ff00ff"/>
<rect x="799" y="23" width="3" height="3" fill="#ff00ff"/>
<rect x="803" y="23" width="3" height="3" fill="#ff00ff"/>
<rect x="807" y="23" width="3" height="3" fill="#ff00ff"/>
<rect x="811" y="23" width="3" height="3" fill="#ff00ff"/>
<rect x="815" y="23" width="3" height="3" fill="#ff00ff"/>
<rect x="820" y="23" width="3" height="3" fill="#ff00ff"/>
<rect x="824" y="23" width="3" height="3" fill="#ff00ff"/>
<rect x="828" y="23" width="3" height="3" fill="#ff00ff"/>
<rect x="837" y="23" width="3" height="3" fill="#ff00ff"/>
<rect x="845" y="23" width="3" height="3" fill="#ff00ff"/>
<rect x="850" y="23" width="3" height="3" fill="#ff00ff"/>
<rect x="875" y="23" width="3" height="3" fill="#ff00ff"/>
<rect x="901" y="23" width="3" height="3" fill="#ff00ff"/>
<rect x="957" y="23" width="3" height="3" fill="#ff00ff"/>
<rect x="1038" y="23" width="3" height="3" fill="#ff00ff"/>
<rect x="1042" y="23" width="3" height="3" fill="#ff00ff"/>
<circle cx="68" cy="268.7" r="4.6" fill="none" stroke="#ffff00" stroke-width="1.15" shape-rendering="geometricPrecision"/>
<text x="68" y="272.2" fill="#ffff00" font-size="9" text-anchor="middle">1</text>
<circle cx="71" cy="266" r="4.6" fill="none" stroke="#ffff00" stroke-width="1.15" shape-rendering="geometricPrecision"/>
<text x="71" y="269.5" fill="#ffff00" font-size="9" text-anchor="middle">2</text>
<circle cx="74" cy="263" r="4.6" fill="none" stroke="#ffff00" stroke-width="1.15" shape-rendering="geometricPrecision"/>
<text x="74" y="266.5" fill="#ffff00" font-size="9" text-anchor="middle">3</text>
<circle cx="77.5" cy="260.5" r="4.6" fill="none" stroke="#ffff00" stroke-width="1.15" shape-rendering="geometricPrecision"/>
<text x="77.5" y="264.0" fill="#ffff00" font-size="9" text-anchor="middle">4</text>
<circle cx="81" cy="260.5" r="4.6" fill="none" stroke="#ffff00" stroke-width="1.15" shape-rendering="geometricPrecision"/>
<text x="81" y="264.0" fill="#ffff00" font-size="9" text-anchor="middle">5</text>
<circle cx="84" cy="262" r="4.6" fill="none" stroke="#ffff00" stroke-width="1.15" shape-rendering="geometricPrecision"/>
<text x="84" y="265.5" fill="#ffff00" font-size="9" text-anchor="middle">6</text>
<circle cx="87" cy="262" r="4.6" fill="none" stroke="#ffff00" stroke-width="1.15" shape-rendering="geometricPrecision"/>
<text x="87" y="265.5" fill="#ffff00" font-size="9" text-anchor="middle">7</text>
<circle cx="269" cy="277" r="4.6" fill="none" stroke="#ffff00" stroke-width="1.15" shape-rendering="geometricPrecision"/>
<text x="269" y="280.5" fill="#ffff00" font-size="9" text-anchor="middle">1</text>
<circle cx="402" cy="295" r="4.6" fill="none" stroke="#ffff00" stroke-width="1.15" shape-rendering="geometricPrecision"/>
<text x="402" y="298.5" fill="#ffff00" font-size="9" text-anchor="middle">1</text>
<circle cx="518" cy="296.3" r="4.6" fill="none" stroke="#ffff00" stroke-width="1.15" shape-rendering="geometricPrecision"/>
<text x="518" y="299.8" fill="#ffff00" font-size="9" text-anchor="middle">1</text>
<circle cx="522.3" cy="296" r="4.6" fill="none" stroke="#ffff00" stroke-width="1.15" shape-rendering="geometricPrecision"/>
<text x="522.3" y="299.5" fill="#ffff00" font-size="9" text-anchor="middle">2</text>
<circle cx="527.8" cy="294" r="4.6" fill="none" stroke="#ffff00" stroke-width="1.15" shape-rendering="geometricPrecision"/>
<text x="527.8" y="297.5" fill="#ffff00" font-size="9" text-anchor="middle">3</text>
<circle cx="531.8" cy="293.5" r="4.6" fill="none" stroke="#ffff00" stroke-width="1.15" shape-rendering="geometricPrecision"/>
<text x="531.8" y="297.0" fill="#ffff00" font-size="9" text-anchor="middle">4</text>
<circle cx="536" cy="293" r="4.6" fill="none" stroke="#ffff00" stroke-width="1.15" shape-rendering="geometricPrecision"/>
<text x="536" y="296.5" fill="#ffff00" font-size="9" text-anchor="middle">5</text>
<circle cx="552" cy="291.2" r="4.6" fill="none" stroke="#ffff00" stroke-width="1.15" shape-rendering="geometricPrecision"/>
<text x="552" y="294.7" fill="#ffff00" font-size="9" text-anchor="middle">1</text>
<circle cx="558" cy="292.3" r="4.6" fill="none" stroke="#ffff00" stroke-width="1.15" shape-rendering="geometricPrecision"/>
<text x="558" y="295.8" fill="#ffff00" font-size="9" text-anchor="middle">2</text>
<circle cx="745.5" cy="270" r="4.6" fill="none" stroke="#ffff00" stroke-width="1.15" shape-rendering="geometricPrecision"/>
<text x="745.5" y="273.5" fill="#ffff00" font-size="9" text-anchor="middle">1</text>
<circle cx="749" cy="267.5" r="4.6" fill="none" stroke="#ffff00" stroke-width="1.15" shape-rendering="geometricPrecision"/>
<text x="749" y="271.0" fill="#ffff00" font-size="9" text-anchor="middle">2</text>
<circle cx="753" cy="265" r="4.6" fill="none" stroke="#ffff00" stroke-width="1.15" shape-rendering="geometricPrecision"/>
<text x="753" y="268.5" fill="#ffff00" font-size="9" text-anchor="middle">3</text>
<circle cx="757" cy="263.5" r="4.6" fill="none" stroke="#ffff00" stroke-width="1.15" shape-rendering="geometricPrecision"/>
<text x="757" y="267.0" fill="#ffff00" font-size="9" text-anchor="middle">4</text>
<circle cx="761" cy="264" r="4.6" fill="none" stroke="#ffff00" stroke-width="1.15" shape-rendering="geometricPrecision"/>
<text x="761" y="267.5" fill="#ffff00" font-size="9" text-anchor="middle">5</text>
<circle cx="764.5" cy="266.5" r="4.6" fill="none" stroke="#ffff00" stroke-width="1.15" shape-rendering="geometricPrecision"/>
<text x="764.5" y="270.0" fill="#ffff00" font-size="9" text-anchor="middle">6</text>
<circle cx="852" cy="127" r="4.6" fill="none" stroke="#ffff00" stroke-width="1.15" shape-rendering="geometricPrecision"/>
<text x="852" y="130.5" fill="#ffff00" font-size="9" text-anchor="middle">1</text>
<circle cx="857" cy="131.5" r="4.6" fill="none" stroke="#ffff00" stroke-width="1.15" shape-rendering="geometricPrecision"/>
<text x="857" y="135.0" fill="#ffff00" font-size="9" text-anchor="middle">2</text>
<circle cx="862" cy="121.5" r="4.6" fill="none" stroke="#ffff00" stroke-width="1.15" shape-rendering="geometricPrecision"/>
<text x="862" y="125.0" fill="#ffff00" font-size="9" text-anchor="middle">3</text>
<circle cx="865.5" cy="96.5" r="4.6" fill="none" stroke="#ffff00" stroke-width="1.15" shape-rendering="geometricPrecision"/>
<text x="865.5" y="100.0" fill="#ffff00" font-size="9" text-anchor="middle">4</text>
<circle cx="869.5" cy="66" r="4.6" fill="none" stroke="#ffff00" stroke-width="1.15" shape-rendering="geometricPrecision"/>
<text x="869.5" y="69.5" fill="#ffff00" font-size="9" text-anchor="middle">5</text>
<circle cx="989.7" cy="199" r="4.6" fill="none" stroke="#ffff00" stroke-width="1.15" shape-rendering="geometricPrecision"/>
<text x="989.7" y="202.5" fill="#ffff00" font-size="9" text-anchor="middle">1</text>
<polyline points="0.0,401.0 55.6,401.0 59.5,342.0 63.4,401.0 226.6,401.0 230.5,342.0 234.4,401.0 256.7,401.0 260.6,342.0 264.5,401.0 389.5,401.0 393.4,342.0 397.3,401.0 505.4,401.0 509.3,342.0 513.2,401.0 539.5,401.0 543.4,342.0 547.3,401.0 976.6,401.0 980.5,342.0 984.4,401.0 1040.5,401.0 1044.4,342.0 1048.3,401.0 1044.0,401.0" fill="none" stroke="#ffff00" stroke-width="2" stroke-linejoin="miter"/>
<polyline points="0.0,498.0 166.6,498.0 170.5,422.0 174.4,498.0 308.3,498.0 312.2,422.0 316.1,498.0 1044.0,498.0" fill="none" stroke="#ffffff" stroke-width="2" stroke-linejoin="miter"/>
<line x1="0" y1="575.5" x2="1044" y2="575.5" stroke="#00ff00" stroke-width="1"/>
<rect x="0" y="584" width="1044" height="3" fill="#ff0000"/>
<rect x="0" y="587" width="1044" height="1" fill="#ffffff"/>
<rect x="35" y="583" width="31" height="1" fill="#ff0000"/>
<rect x="35" y="584" width="31" height="2" fill="#ffff00"/>
<rect x="104" y="583" width="34" height="1" fill="#ff0000"/>
<rect x="104" y="584" width="34" height="2" fill="#ffff00"/>
<rect x="220" y="583" width="26" height="1" fill="#ff0000"/>
<rect x="220" y="584" width="26" height="2" fill="#ffff00"/>
<rect x="267" y="583" width="13" height="1" fill="#ff0000"/>
<rect x="267" y="584" width="13" height="2" fill="#ffff00"/>
<rect x="348" y="583" width="9" height="1" fill="#ff0000"/>
<rect x="348" y="584" width="9" height="2" fill="#ffff00"/>
<rect x="400" y="583" width="8" height="1" fill="#ff0000"/>
<rect x="400" y="584" width="8" height="2" fill="#ffff00"/>
<rect x="413" y="583" width="4" height="1" fill="#ff0000"/>
<rect x="413" y="584" width="4" height="2" fill="#ffff00"/>
<rect x="421" y="583" width="14" height="1" fill="#ff0000"/>
<rect x="421" y="584" width="14" height="2" fill="#ffff00"/>
<rect x="451" y="583" width="9" height="1" fill="#ff0000"/>
<rect x="451" y="584" width="9" height="2" fill="#ffff00"/>
<rect x="498" y="583" width="22" height="1" fill="#ff0000"/>
<rect x="498" y="584" width="22" height="2" fill="#ffff00"/>
<rect x="537" y="583" width="9" height="1" fill="#ff0000"/>
<rect x="537" y="584" width="9" height="2" fill="#ffff00"/>
<rect x="592" y="583" width="5" height="1" fill="#ff0000"/>
<rect x="592" y="584" width="5" height="2" fill="#ffff00"/>
<rect x="601" y="583" width="9" height="1" fill="#ff0000"/>
<rect x="601" y="584" width="9" height="2" fill="#ffff00"/>
<rect x="657" y="583" width="35" height="1" fill="#ff0000"/>
<rect x="657" y="584" width="35" height="2" fill="#ffff00"/>
<rect x="721" y="583" width="9" height="1" fill="#ff0000"/>
<rect x="721" y="584" width="9" height="2" fill="#ffff00"/>
<rect x="743" y="583" width="4" height="1" fill="#ff0000"/>
<rect x="743" y="584" width="4" height="2" fill="#ffff00"/>
<rect x="777" y="583" width="9" height="1" fill="#ff0000"/>
<rect x="777" y="584" width="9" height="2" fill="#ffff00"/>
<rect x="824" y="583" width="21" height="1" fill="#ff0000"/>
<rect x="824" y="584" width="21" height="2" fill="#ffff00"/>
<rect x="974" y="583" width="26" height="1" fill="#ff0000"/>
<rect x="974" y="584" width="26" height="2" fill="#ffff00"/>
<rect x="1030" y="583" width="14" height="1" fill="#ff0000"/>
<rect x="1030" y="584" width="14" height="2" fill="#ffff00"/>
<rect x="152" y="584" width="16" height="3" fill="#ffff00"/>
<rect x="293" y="584" width="17" height="3" fill="#ffff00"/>
<rect x="357" y="584" width="9" height="3" fill="#ffff00"/>
<rect x="859" y="584" width="64" height="3" fill="#ffff00"/>
<rect x="138" y="583" width="14" height="4" fill="#0080ff"/>
<rect x="280" y="583" width="13" height="4" fill="#0080ff"/>
<rect x="408" y="583" width="5" height="4" fill="#0080ff"/>
<rect x="610" y="583" width="13" height="4" fill="#0080ff"/>
<rect x="730" y="583" width="13" height="4" fill="#0080ff"/>
<rect x="845" y="583" width="14" height="4" fill="#0080ff"/>
<rect x="0" y="583" width="19" height="1" fill="#0000ff"/>
<rect x="0" y="584" width="19" height="2" fill="#ff0000"/>
<rect x="0" y="586" width="19" height="1" fill="#ffff00"/>
<rect x="168" y="583" width="35" height="1" fill="#0000ff"/>
<rect x="168" y="584" width="35" height="2" fill="#ff0000"/>
<rect x="168" y="586" width="35" height="1" fill="#ffff00"/>
<rect x="315" y="583" width="25" height="1" fill="#0000ff"/>
<rect x="315" y="584" width="25" height="2" fill="#ff0000"/>
<rect x="315" y="586" width="25" height="1" fill="#ffff00"/>
<rect x="365" y="583" width="5" height="1" fill="#0000ff"/>
<rect x="365" y="584" width="5" height="2" fill="#ff0000"/>
<rect x="365" y="586" width="5" height="1" fill="#ffff00"/>
<rect x="623" y="583" width="9" height="1" fill="#0000ff"/>
<rect x="623" y="584" width="9" height="2" fill="#ff0000"/>
<rect x="623" y="586" width="9" height="1" fill="#ffff00"/>
<rect x="862" y="583" width="5" height="1" fill="#0000ff"/>
<rect x="862" y="584" width="5" height="2" fill="#ff0000"/>
<rect x="862" y="586" width="5" height="1" fill="#ffff00"/>
<rect x="914" y="583" width="4" height="1" fill="#0000ff"/>
<rect x="914" y="584" width="4" height="2" fill="#ff0000"/>
<rect x="914" y="586" width="4" height="1" fill="#ffff00"/>
<rect x="923" y="583" width="30" height="1" fill="#0000ff"/>
<rect x="923" y="584" width="30" height="2" fill="#ff0000"/>
<rect x="923" y="586" width="30" height="1" fill="#ffff00"/>
<rect x="66" y="583" width="4" height="1" fill="#ff00ff"/>
<rect x="460" y="583" width="5" height="1" fill="#ff00ff"/>
<rect x="91" y="580" width="9" height="5" fill="#808080"/>
<rect x="477" y="582" width="9" height="3" fill="#808080"/>
<rect x="477" y="581" width="5" height="4" fill="#808080"/>
<rect x="545" y="582" width="10" height="3" fill="#808080"/>
<rect x="545" y="581" width="5" height="4" fill="#808080"/>
<rect x="575" y="582" width="10" height="3" fill="#808080"/>
<rect x="631" y="582" width="9" height="3" fill="#808080"/>
<rect x="635" y="581" width="5" height="4" fill="#808080"/>
<rect x="712" y="581" width="10" height="4" fill="#808080"/>
<rect x="712" y="578" width="5" height="7" fill="#808080"/>
<rect x="742" y="581" width="10" height="4" fill="#808080"/>
<rect x="747" y="578" width="5" height="7" fill="#808080"/>
<rect x="764" y="581" width="9" height="4" fill="#808080"/>
<rect x="764" y="578" width="5" height="7" fill="#808080"/>
<rect x="1004" y="580" width="9" height="5" fill="#808080"/>
<rect x="1008" y="577" width="5" height="8" fill="#808080"/>
<rect x="648" y="574" width="9" height="11" fill="#00ff00"/>
<rect x="652" y="572" width="5" height="3" fill="#00ff00"/>
<rect x="168" y="584" width="5" height="7" fill="#ffffff"/>
<rect x="310" y="584" width="5" height="7" fill="#ffffff"/>
<text x="0" y="19" fill="#c0c0c0" font-size="12" >广博股份(日线.前复权)</text>
<circle cx="131.5" cy="15.5" r="5.8" fill="#808080" shape-rendering="geometricPrecision"/>
<polyline points="128.2,14.2 131.5,17.2 134.8,14.2" fill="none" stroke="#000" stroke-width="1.3" shape-rendering="geometricPrecision"/>
<text x="141" y="19" fill="#c0c0c0" font-size="12" >神奇5天主图</text>
<text x="213" y="19" fill="#ffffff" font-size="12" >短线成本: 10.69</text>
<text x="303" y="19" fill="#ff00ff" font-size="12" >中线成本: 10.41</text>
<text x="393" y="19" fill="#00ff00" font-size="12" >长线成本: 10.04</text>
<circle cx="5.5" cy="331" r="5.8" fill="#808080" shape-rendering="geometricPrecision"/>
<polyline points="2.2,329.7 5.5,332.7 8.8,329.7" fill="none" stroke="#000" stroke-width="1.3" shape-rendering="geometricPrecision"/>
<text x="15" y="335" fill="#c0c0c0" font-size="12" >神奇涨5天副图(9,5,100,100,50)</text>
<text x="189" y="335" fill="#ffff00" font-size="12" >神奇涨5天: 100.00</text>
<text x="292" y="335" fill="#ffff00" font-size="12" >上涨天数: 11.00</text>
<text x="383" y="335" fill="#ff00ff" font-size="12" >下跌天数: 0.00</text>
<circle cx="5.5" cy="411" r="5.8" fill="#808080" shape-rendering="geometricPrecision"/>
<polyline points="2.2,409.7 5.5,412.7 8.8,409.7" fill="none" stroke="#000" stroke-width="1.3" shape-rendering="geometricPrecision"/>
<text x="15" y="415" fill="#c0c0c0" font-size="12" >主力建仓副图(9,5,100,100,50,-5)</text>
<text x="196" y="415" fill="#ffffff" font-size="12" >主力建仓: 0.00</text>
<circle cx="5.5" cy="509" r="5.8" fill="#808080" shape-rendering="geometricPrecision"/>
<polyline points="2.2,507.7 5.5,510.7 8.8,507.7" fill="none" stroke="#000" stroke-width="1.3" shape-rendering="geometricPrecision"/>
<text x="15" y="513" fill="#c0c0c0" font-size="12" >主力操盘副图(-5,15,3,4)</text>
<text x="148" y="513" fill="#ffffff" font-size="12" >主力建仓: 0.00</text>
<text x="231" y="513" fill="#ff00ff" font-size="12" >主力突破: 0.00</text>
<text x="314" y="513" fill="#ff0000" font-size="12" >主力洗盘: 1.00</text>
<text x="397" y="513" fill="#0080ff" font-size="12" >主力变盘: 0.00</text>
<text x="480" y="513" fill="#00ff00" font-size="12" >主力出货: 0.00</text>
<text x="563" y="513" fill="#0000ff" font-size="12" >主力诱多: 0.00</text>
<text x="646" y="513" fill="#808080" font-size="12" >短线调整: 0.00</text>
<text x="728" y="513" fill="#ffffff" font-size="12" >建仓区: -5.00</text>
<text x="804" y="513" fill="#00ff00" font-size="12" >出货区: 15.00</text>
<text x="841" y="39.5" fill="#c0c0c0" font-size="12" >18.78</text>
<polyline points="838,35.5 833,33.5 828,32.5" fill="none" stroke="#c0c0c0" shape-rendering="geometricPrecision"/>
<polyline points="831,30 827.5,32.5 831,36" fill="none" stroke="#c0c0c0" shape-rendering="geometricPrecision"/>
<text x="873" y="132.5" fill="#c0c0c0" font-size="12" >13.26 - 12.63</text>
<text x="949" y="229.5" fill="#c0c0c0" font-size="12" >9.14 - 9.18</text>
<text x="470.5" y="309.5" fill="#c0c0c0" font-size="12" >4.55</text>
<line x1="457" y1="304.5" x2="469" y2="304.5" stroke="#c0c0c0"/>
<polyline points="461,301 457.5,304.5 461,308" fill="none" stroke="#c0c0c0" shape-rendering="geometricPrecision"/>
<rect x="416" y="308" width="13" height="13" fill="#9c5000"/>
<rect x="417.5" y="310.5" width="9" height="9" fill="none" stroke="#fff"/>
<rect x="419.5" y="312.5" width="5" height="5" fill="none" stroke="#fff"/>
<rect x="720" y="308" width="13" height="13" fill="#1c3f7c"/>
<text x="720.5" y="319" fill="#ffffff" font-size="12" >财</text>
<rect x="862" y="308" width="13" height="13" fill="#008000"/>
<text x="862.5" y="319" fill="#ffffff" font-size="12" >跌</text>
<rect x="943" y="308" width="4" height="13" fill="#8b0000"/>
<clipPath id="cz"><rect x="943" y="308" width="4" height="13"/></clipPath>
<text x="943.5" y="319" fill="#fff" font-size="12" clip-path="url(#cz)">涨</text>
<rect x="947" y="308" width="13" height="13" fill="#9c5000"/>
<text x="947.5" y="319" fill="#ffffff" font-size="12" >榜</text>
<polygon points="1019.5,10.3 1024.7,15.5 1019.5,20.7 1014.3,15.5" fill="none" stroke="#8c8c8c" shape-rendering="geometricPrecision"/>
<rect x="1032.8" y="10.6" width="10.6" height="10" rx="2.2" fill="none" stroke="#8c8c8c" stroke-width="1.3" shape-rendering="geometricPrecision"/>
<rect x="1039" y="12" width="3" height="7" fill="#a0a0a0"/>
<rect x="25" y="0" width="2" height="1" fill="#e0e0e0"/>
<rect x="37" y="0" width="2" height="1" fill="#e0e0e0"/>
<rect x="49" y="0" width="1" height="1" fill="#e0e0e0"/>
<rect x="54" y="0" width="2" height="1" fill="#e0e0e0"/>
<rect x="66" y="0" width="1" height="1" fill="#e0e0e0"/>
<rect x="69" y="0" width="1" height="1" fill="#e0e0e0"/>
<rect x="73" y="0" width="3" height="1" fill="#e0e0e0"/>
<rect x="78" y="0" width="3" height="1" fill="#e0e0e0"/>
<rect x="89" y="0" width="1" height="1" fill="#e0e0e0"/>
<rect x="98" y="0" width="2" height="1" fill="#e0e0e0"/>
<rect x="101" y="0" width="2" height="1" fill="#e0e0e0"/>
<rect x="107" y="0" width="2" height="1" fill="#e0e0e0"/>
<rect x="111" y="0" width="3" height="1" fill="#e0e0e0"/>
<rect x="116" y="0" width="1" height="1" fill="#e0e0e0"/>
<rect x="119" y="0" width="3" height="1" fill="#e0e0e0"/>
<rect x="124" y="0" width="2" height="1" fill="#e0e0e0"/>
<rect x="127" y="0" width="1" height="1" fill="#e0e0e0"/>
<rect x="130" y="0" width="2" height="1" fill="#e0e0e0"/>
<rect x="134" y="0" width="2" height="1" fill="#e0e0e0"/>
<rect x="139" y="0" width="2" height="1" fill="#e0e0e0"/>
<rect x="143" y="0" width="2" height="1" fill="#e0e0e0"/>
<rect x="147" y="0" width="2" height="1" fill="#e0e0e0"/>
<rect x="153" y="0" width="2" height="1" fill="#e0e0e0"/>
<rect x="156" y="0" width="2" height="1" fill="#e0e0e0"/>
<rect x="162" y="0" width="2" height="1" fill="#e0e0e0"/>
<rect x="166" y="0" width="2" height="1" fill="#e0e0e0"/>
<rect x="169" y="0" width="2" height="1" fill="#e0e0e0"/>
<rect x="174" y="0" width="1" height="1" fill="#e0e0e0"/>
<rect x="183" y="0" width="2" height="1" fill="#e0e0e0"/>
<rect x="186" y="0" width="2" height="1" fill="#e0e0e0"/>
<rect x="191" y="0" width="2" height="1" fill="#e0e0e0"/>
<rect x="197" y="0" width="2" height="1" fill="#e0e0e0"/>
<rect x="201" y="0" width="3" height="1" fill="#e0e0e0"/>
<rect x="208" y="0" width="2" height="1" fill="#e0e0e0"/>
<rect x="211" y="0" width="2" height="1" fill="#e0e0e0"/>
<rect x="214" y="0" width="2" height="1" fill="#e0e0e0"/>
<rect x="220" y="0" width="1" height="1" fill="#e0e0e0"/>
<rect x="229" y="0" width="3" height="1" fill="#e0e0e0"/>
<rect x="235" y="0" width="3" height="1" fill="#e0e0e0"/>
<rect x="246" y="0" width="1" height="1" fill="#e0e0e0"/>
<rect x="251" y="0" width="1" height="1" fill="#e0e0e0"/>
<rect x="262" y="0" width="2" height="1" fill="#e0e0e0"/>
<rect x="272" y="0" width="2" height="1" fill="#e0e0e0"/>
<rect x="275" y="0" width="2" height="1" fill="#e0e0e0"/>
<rect x="281" y="0" width="2" height="1" fill="#e0e0e0"/>
<rect x="291" y="0" width="2" height="1" fill="#e0e0e0"/>
<rect x="301" y="0" width="2" height="1" fill="#e0e0e0"/>
<rect x="307" y="0" width="1" height="1" fill="#e0e0e0"/>
<rect x="316" y="0" width="2" height="1" fill="#e0e0e0"/>
<rect x="321" y="0" width="1" height="1" fill="#e0e0e0"/>
<rect x="326" y="0" width="1" height="1" fill="#e0e0e0"/>
<rect x="329" y="0" width="2" height="1" fill="#e0e0e0"/>
<rect x="339" y="0" width="2" height="1" fill="#e0e0e0"/>
<rect x="343" y="0" width="2" height="1" fill="#e0e0e0"/>
<rect x="348" y="0" width="1" height="1" fill="#e0e0e0"/>
<rect x="352" y="0" width="2" height="1" fill="#e0e0e0"/>
<rect x="357" y="0" width="2" height="1" fill="#e0e0e0"/>
<rect x="360" y="0" width="2" height="1" fill="#e0e0e0"/>
<rect x="372" y="0" width="2" height="1" fill="#e0e0e0"/>
<rect x="378" y="0" width="2" height="1" fill="#e0e0e0"/>
<rect x="390" y="0" width="1" height="1" fill="#e0e0e0"/>
<rect x="392" y="0" width="3" height="1" fill="#e0e0e0"/>
<rect x="396" y="0" width="2" height="1" fill="#e0e0e0"/>
<rect x="748" y="0" width="9" height="1" fill="#e0e0e0"/>
<rect x="762" y="0" width="2" height="1" fill="#e0e0e0"/>
<rect x="766" y="0" width="2" height="1" fill="#e0e0e0"/>
<rect x="783" y="0" width="3" height="1" fill="#e0e0e0"/>
<rect x="788" y="0" width="2" height="1" fill="#e0e0e0"/>
<rect x="792" y="0" width="2" height="1" fill="#e0e0e0"/>
<rect x="797" y="0" width="2" height="1" fill="#e0e0e0"/>
<rect x="802" y="0" width="3" height="1" fill="#e0e0e0"/>
<rect x="816" y="0" width="10" height="1" fill="#e0e0e0"/>
<rect x="829" y="0" width="2" height="1" fill="#e0e0e0"/>
<rect x="833" y="0" width="2" height="1" fill="#e0e0e0"/>
<rect x="838" y="0" width="2" height="1" fill="#e0e0e0"/>
<rect x="850" y="0" width="3" height="1" fill="#e0e0e0"/>
<rect x="856" y="0" width="2" height="1" fill="#e0e0e0"/>
<rect x="861" y="0" width="3" height="1" fill="#e0e0e0"/>
<rect x="868" y="0" width="2" height="1" fill="#e0e0e0"/>
<rect x="873" y="0" width="2" height="1" fill="#e0e0e0"/>
<rect x="893" y="0" width="3" height="1" fill="#e0e0e0"/>
<rect x="899" y="0" width="2" height="1" fill="#e0e0e0"/>
<rect x="905" y="0" width="3" height="1" fill="#e0e0e0"/>
<rect x="927" y="0" width="3" height="1" fill="#e0e0e0"/>
<rect x="934" y="0" width="2" height="1" fill="#e0e0e0"/>
<rect x="940" y="0" width="4" height="1" fill="#e0e0e0"/>
<rect x="993" y="0" width="3" height="1" fill="#e0e0e0"/>
<rect x="999" y="0" width="2" height="1" fill="#e0e0e0"/>
<rect x="1004" y="0" width="3" height="1" fill="#e0e0e0"/>
<rect x="1011" y="0" width="4" height="1" fill="#e0e0e0"/>
<rect x="1033" y="0" width="11" height="1" fill="#e0e0e0"/>
</svg>
</body></html>
